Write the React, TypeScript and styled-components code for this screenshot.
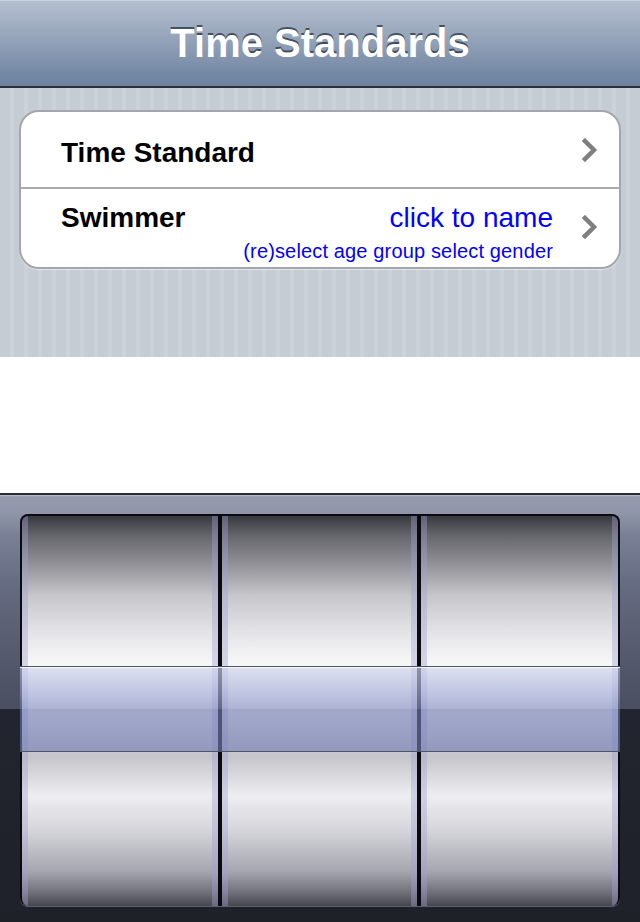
import styled, { createGlobalStyle } from "styled-components";

const GlobalStyle = createGlobalStyle`
  html, body {
    margin: 0;
    padding: 0;
    background: #ffffff;
  }
  body {
    font-family: "Liberation Sans", Arial, sans-serif;
    width: 640px;
    height: 922px;
    overflow: hidden;
  }
`;

const Screen = styled.div`
  width: 640px;
  height: 922px;
  display: flex;
  flex-direction: column;
  background: #ffffff;
`;

const NavBar = styled.header`
  flex: none;
  display: flex;
  align-items: center;
  justify-content: center;
  border-top: 1px solid #c9d2dd;
  box-sizing: border-box;
  border-bottom: 2px solid #2b3038;
  height: 88px;
  background: linear-gradient(
    to bottom,
    #b4bfce 0%,
    #a3b0c3 25%,
    #8c9cb3 55%,
    #7589a6 85%,
    #6c82a0 100%
  );
`;

const Title = styled.h1`
  margin: 0;
  font-size: 40px;
  font-weight: bold;
  color: #ffffff;
  text-shadow: 0 -2px 0 rgba(40, 50, 66, 0.75);
`;

const Grouped = styled.section`
  height: 269px;
  flex: none;
  box-sizing: border-box;
  padding: 22px 19px 0;
  background: repeating-linear-gradient(
    90deg,
    #c5ccd4 0px,
    #c5ccd4 10px,
    #cbd2d9 10px,
    #cbd2d9 14px
  );
`;

const Table = styled.div`
  background: #ffffff;
  border: 2px solid #a4a6a9;
  border-radius: 20px;
  overflow: hidden;
  box-shadow: 0 1px 0 rgba(255, 255, 255, 0.5);
`;

const Row = styled.div<{ $tall?: boolean }>`
  display: flex;
  align-items: ${(p) => (p.$tall ? "flex-start" : "center")};
  box-sizing: border-box;
  height: ${(p) => (p.$tall ? "80px" : "75px")};
  padding: ${(p) => (p.$tall ? "13px 21px 0 40px" : "6px 21px 0 40px")};
  & + & {
    border-top: 2px solid #ababab;
  }
`;

const Label = styled.span`
  font-size: 28px;
  line-height: 32px;
  font-weight: bold;
  color: #000000;
`;

const Detail = styled.div`
  margin-left: auto;
  display: flex;
  flex-direction: column;
  align-items: flex-end;
  gap: 5px;
`;

const DetailMain = styled.span`
  font-size: 28px;
  line-height: 32px;
  color: #0000ff;
`;

const DetailSub = styled.span`
  font-size: 20px;
  line-height: 24px;
  letter-spacing: 0.15px;
  color: #0000ff;
`;

const Chevron = styled.svg<{ $offset?: number }>`
  flex: none;
  width: 16px;
  height: 24px;
  margin-left: ${(p) => (p.$offset ? "29px" : "auto")};
  margin-top: ${(p) => (p.$offset ? `${p.$offset}px` : "-6px")};
`;

const Blank = styled.div`
  height: 136px;
  flex: none;
  background: #ffffff;
`;

const Picker = styled.div`
  position: relative;
  flex: none;
  height: 429px;
  box-sizing: border-box;
  border-top: 2px solid #272c35;
  padding: 19px 20px 16px;
  background: linear-gradient(
    to bottom,
    #b9bdc9 0px,
    #959bad 2px,
    #9096a9 18px,
    #7a8196 40px,
    #656b81 90px,
    #575c70 150px,
    #4a4e60 214px,
    #22252f 214px,
    #1f2129 100%
  );
`;

const Wheels = styled.div`
  display: flex;
  gap: 4px;
  height: 392px;
  box-sizing: border-box;
  border: 2px solid #0b0b0d;
  border-bottom: none;
  border-radius: 8px;
  background: #0b0b0d;
  overflow: hidden;
  box-shadow: 0 1px 0 #5d6074;
`;

const Wheel = styled.div<{ $w: number }>`
  width: ${(p) => p.$w}px;
  flex: none;
  background: linear-gradient(
    to bottom,
    #38383f 0px,
    #66666d 20px,
    #8c8c92 45px,
    #c6c6cb 80px,
    #dfdfe3 110px,
    #f0f0f2 135px,
    #f9f9f9 152px,
    #f4f4f6 200px,
    #c4c4ca 240px,
    #eeeef1 280px,
    #d4d4da 315px,
    #a6a6b0 355px,
    #74747e 375px,
    #45454d 390px
  );
  box-shadow: inset 6px 0 0 rgba(160, 160, 210, 0.4),
    inset -6px 0 0 rgba(160, 160, 210, 0.4);
`;

const Selection = styled.div`
  position: absolute;
  left: 20px;
  right: 20px;
  top: 171px;
  height: 86px;
  box-sizing: border-box;
  border-top: 1px solid #4c5564;
  border-bottom: 1px solid #4c5564;
  box-shadow: inset 0 1px 0 rgba(255, 255, 255, 0.8);
  background: linear-gradient(
    to bottom,
    rgba(208, 213, 236, 0.68) 0px,
    rgba(170, 178, 218, 0.68) 24px,
    rgba(138, 146, 194, 0.68) 42px,
    rgba(116, 125, 178, 0.64) 42px,
    rgba(116, 125, 178, 0.64) 100%
  );
`;

function ChevronIcon({ offset }: { offset?: number }) {
  return (
    <Chevron $offset={offset} viewBox="0 0 16 24">
      <polyline
        points="3,3 12,12 3,21"
        fill="none"
        stroke="#7f7f7f"
        strokeWidth="4.5"
        strokeLinecap="square"
      />
    </Chevron>
  );
}

export default function App() {
  return (
    <Screen>
      <GlobalStyle />
      <NavBar>
        <Title>Time Standards</Title>
      </NavBar>
      <Grouped>
        <Table>
          <Row>
            <Label>Time Standard</Label>
            <ChevronIcon />
          </Row>
          <Row $tall>
            <Label>Swimmer</Label>
            <Detail>
              <DetailMain>click to name</DetailMain>
              <DetailSub>(re)select age group select gender</DetailSub>
            </Detail>
            <ChevronIcon offset={13} />
          </Row>
        </Table>
      </Grouped>
      <Blank />
      <Picker>
        <Wheels>
          <Wheel $w={196} />
          <Wheel $w={195} />
          <Wheel $w={197} />
        </Wheels>
        <Selection />
      </Picker>
    </Screen>
  );
}
